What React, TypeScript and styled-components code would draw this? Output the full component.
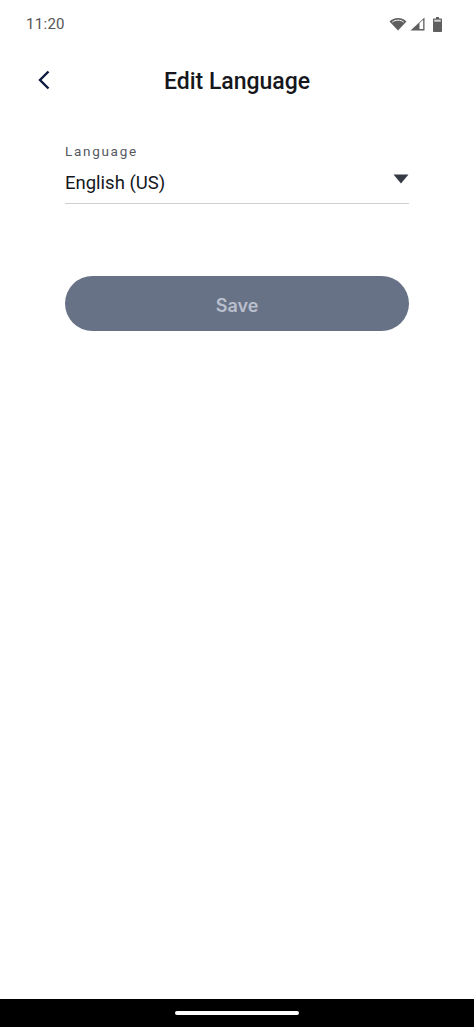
import styled, { createGlobalStyle } from "styled-components";

const GlobalStyle = createGlobalStyle`
    html, body {
        margin: 0;
        padding: 0;
        background: #fff;
    }
    * {
        box-sizing: border-box;
    }
`;

export default function App() {
    return (
        <>
            <GlobalStyle />
            <Screen>
                <StatusBar>
                    <Clock>11:20</Clock>
                    <StatusIcons>
                        <svg width="18" height="14" viewBox="0 0 18 14">
                            <path d="M0.5 4.6C2.6 2.4 5.6 1 9 1s6.4 1.4 8.500 3.6L9 13.5z" fill="#5f5f5f" />
                            <path d="M3.3 5.1C4.8 3.900 6.8 3.2 9 3.2s4.2.7 5.7 1.9" stroke="#fff" strokeWidth="1" fill="none" />
                        </svg>
                        <svg width="15" height="14" viewBox="0 0 15 14">
                            <path d="M14.5 0.5V13.5H0.5z" fill="#5f5f5f" />
                            <path d="M9.5 6L13.2 2.8V12H9.5z" fill="#fff" />
                        </svg>
                        <BatteryIcon width="9" height="15" viewBox="0 0 9 15">
                            <path d="M3 0h3v1.5h2.2c.4 0 .8.4.8.8v11.9c0 .4-.4.8-.8.8H.8c-.4 0-.8-.4-.8-.8V2.300c0-.4.4-.8.8-.8H3z" fill="#5f5f5f" />
                            <rect x="1.2" y="2.7" width="6.6" height="2" fill="#d5d5d5" />
                        </BatteryIcon>
                    </StatusIcons>
                </StatusBar>
                <Header>
                    <BackButton aria-label="Back">
                        <svg width="14" height="20" viewBox="0 0 14 20">
                            <path d="M11.5 1.5L3 10l8.5 8.5" stroke="#0d1b3e" strokeWidth="2.4" fill="none" />
                        </svg>
                    </BackButton>
                    <Title>Edit Language</Title>
                </Header>
                <Content>
                    <Field>
                        <FieldLabel>Language</FieldLabel>
                        <FieldValue>
                            <span>English (US)</span>
                            <svg width="16" height="10" viewBox="0 0 16 10">
                                <path d="M0.5 0.5H15.5L8 9.5z" fill="#363a45" />
                            </svg>
                        </FieldValue>
                    </Field>
                    <SaveButton disabled>Save</SaveButton>
                </Content>
                <NavBar>
                    <HomeHandle />
                </NavBar>
            </Screen>
        </>
    );
}

const Screen = styled.div`
    width: 474px;
    height: 1027px;
    display: flex;
    flex-direction: column;
    background: #fff;
    font-family: Roboto, "Liberation Sans", sans-serif;
`;

const StatusBar = styled.div`
    height: 48px;
    padding: 0 32px 0 26px;
    display: flex;
    align-items: center;
    justify-content: space-between;
`;

const Clock = styled.span`
    font-size: 15px;
    letter-spacing: 0.3px;
    color: #555;
`;

const StatusIcons = styled.div`
    display: flex;
    align-items: center;
    gap: 3px;
`;

const BatteryIcon = styled.svg`
    margin-left: 5px;
`;

const Header = styled.div`
    height: 66px;
    display: flex;
    align-items: center;
    justify-content: center;
    position: relative;
`;

const BackButton = styled.button`
    position: absolute;
    left: 37px;
    top: 22px;
    padding: 0;
    border: none;
    background: none;
    display: flex;
`;

const Title = styled.h1`
    margin: 0;
    font-size: 23px;
    font-weight: 500;
    color: #15171c;
`;

const Content = styled.div`
    flex: 1;
    padding: 29px 65px 0;
    display: flex;
    flex-direction: column;
`;

const Field = styled.div`
    display: flex;
    flex-direction: column;
    border-bottom: 1px solid #cfcfd2;
`;

const FieldLabel = styled.label`
    font-size: 13.5px;
    line-height: 16px;
    letter-spacing: 1.7px;
    color: #55585f;
`;

const FieldValue = styled.div`
    height: 44px;
    display: flex;
    justify-content: space-between;
    padding-top: 12px;
    font-size: 18.5px;
    line-height: 24px;
    color: #15171c;

    svg {
        margin-top: 3px;
    }
`;

const SaveButton = styled.button`
    margin-top: 72px;
    height: 55px;
    padding: 4px 0 0;
    border: none;
    border-radius: 28px;
    background: #687287;
    color: #b9bfcc;
    font-family: Inter, "Liberation Sans", sans-serif;
    font-size: 18px;
    font-weight: 600;
`;

const NavBar = styled.div`
    height: 28px;
    background: #000;
    display: flex;
    justify-content: center;
    padding-top: 12px;
    flex-shrink: 0;
`;

const HomeHandle = styled.div`
    width: 124px;
    height: 4px;
    border-radius: 2px;
    background: #fff;
`;
